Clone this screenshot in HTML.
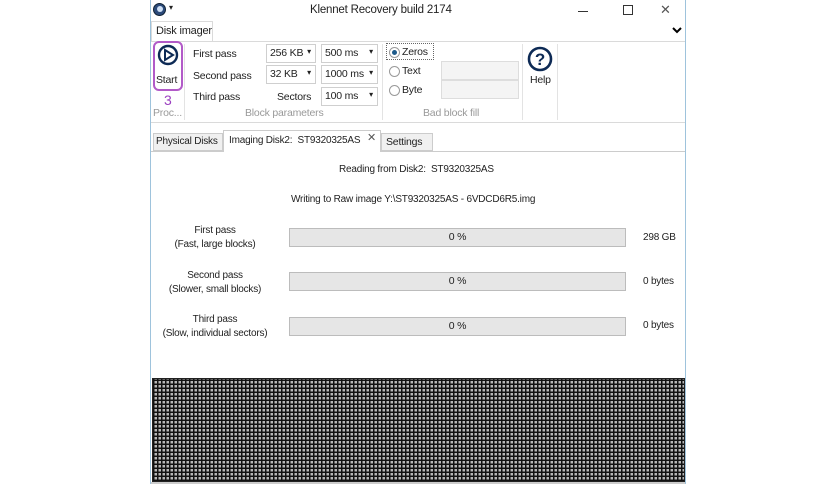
<!DOCTYPE html>
<html><head><meta charset="utf-8"><style>
*{margin:0;padding:0;box-sizing:border-box}
body{width:836px;height:484px;background:#fff;font-family:"Liberation Sans",sans-serif;font-size:10.5px;letter-spacing:-0.2px;color:#222;position:relative;overflow:hidden}
.a{position:absolute;white-space:nowrap}
.dd{position:absolute;height:19px;border:1px solid #cfcfcf;background:#fff;padding:2px 3px;font-size:10.5px}
.dd:after{content:"▾";position:absolute;right:4px;top:2px;font-size:8px}
.bar{position:absolute;left:289px;width:337px;height:19px;background:#e6e6e6;border:1px solid #bcbcbc;text-align:center;line-height:17px}
.rad{position:absolute;width:11px;height:11px;border:1px solid #999;border-radius:50%;background:#fff}
.c{text-align:center}
.g{color:#999}
</style></head><body>
<div class="a" style="left:150px;top:0;width:1px;height:484px;background:#9ec3dc"></div>
<div class="a" style="left:685px;top:0;width:1px;height:484px;background:#9ec3dc"></div>
<div class="a" style="left:153px;top:3px;width:13px;height:13px;border-radius:50%;background:#2b4a7a;border:1px solid #123"></div>
<div class="a" style="left:157px;top:6px;width:6px;height:6px;border-radius:50%;background:#cfe0f5"></div>
<div class="a" style="left:169px;top:3px;font-size:8px">▾</div>
<div class="a" style="left:310px;top:4px;font-size:11.5px">Klennet Recovery build 2174</div>
<div class="a" style="left:578px;top:11px;width:10px;height:1px;background:#333"></div>
<div class="a" style="left:623px;top:5px;width:10px;height:10px;border:1px solid #333"></div>
<div class="a" style="left:660px;top:2px;font-size:13px;color:#555">✕</div>
<div class="a" style="left:151px;top:21px;width:62px;height:21px;border:1px solid #dadada;border-bottom:none;background:#fff"></div>
<div class="a" style="left:156px;top:25px;font-size:11px">Disk imager</div>
<svg class="a" style="left:672px;top:27px" width="10" height="7" viewBox="0 0 10 7"><path d="M1 1 L5 5 L9 1" fill="none" stroke="#000" stroke-width="2"/></svg>
<div class="a" style="left:151px;top:41px;width:534px;height:1px;background:#dadada"></div>
<div class="a" style="left:153px;top:41px;width:30px;height:50px;border:2px solid #b25ac8;border-radius:6px"></div>
<svg class="a" style="left:157px;top:44px" width="22" height="22" viewBox="0 0 22 22"><circle cx="11" cy="11" r="9" fill="none" stroke="#0d2a55" stroke-width="2.4"/><path d="M8 6 L16 11 L8 16 Z" fill="none" stroke="#0d2a55" stroke-width="2"/></svg>
<div class="a" style="left:156px;top:74px">Start</div>
<div class="a" style="left:164px;top:92px;color:#9b3fc0;font-size:14px">3</div>
<div class="a g" style="left:153px;top:107px">Proc...</div>
<div class="a" style="left:184px;top:44px;width:1px;height:76px;background:#e3e3e3"></div>
<div class="a" style="left:193px;top:48px">First pass</div>
<div class="a" style="left:193px;top:70px">Second pass</div>
<div class="a" style="left:193px;top:91px">Third pass</div>
<div class="dd" style="left:266px;top:44px;width:50px">256 KB</div>
<div class="dd" style="left:266px;top:65px;width:50px">32 KB</div>
<div class="a" style="left:277px;top:91px">Sectors</div>
<div class="dd" style="left:321px;top:44px;width:57px">500 ms</div>
<div class="dd" style="left:321px;top:65px;width:57px">1000 ms</div>
<div class="dd" style="left:321px;top:87px;width:57px">100 ms</div>
<div class="a g" style="left:245px;top:107px">Block parameters</div>
<div class="a" style="left:382px;top:44px;width:1px;height:76px;background:#e3e3e3"></div>
<div class="a" style="left:386px;top:43px;width:48px;height:17px;border:1px dotted #666"></div>
<div class="rad" style="left:389px;top:47px"></div>
<div class="a" style="left:392px;top:50px;width:5px;height:5px;border-radius:50%;background:#1d5a8a"></div>
<div class="a" style="left:402px;top:46px">Zeros</div>
<div class="rad" style="left:389px;top:66px"></div>
<div class="a" style="left:402px;top:65px">Text</div>
<div class="rad" style="left:389px;top:85px"></div>
<div class="a" style="left:402px;top:84px">Byte</div>
<div class="a" style="left:441px;top:61px;width:78px;height:19px;border:1px solid #ddd;background:#f4f4f4"></div>
<div class="a" style="left:441px;top:80px;width:78px;height:19px;border:1px solid #ddd;background:#f4f4f4"></div>
<div class="a g" style="left:423px;top:107px">Bad block fill</div>
<div class="a" style="left:522px;top:44px;width:1px;height:76px;background:#e3e3e3"></div>
<svg class="a" style="left:527px;top:46px" width="26" height="26" viewBox="0 0 26 26"><circle cx="13" cy="13" r="11" fill="#fff" stroke="#0d2a55" stroke-width="2.6"/><text x="13" y="19" text-anchor="middle" font-family="Liberation Sans" font-weight="bold" font-size="17" fill="#0d2a55">?</text></svg>
<div class="a" style="left:530px;top:74px">Help</div>
<div class="a" style="left:557px;top:44px;width:1px;height:76px;background:#e3e3e3"></div>
<div class="a" style="left:151px;top:122px;width:534px;height:1px;background:#dadada"></div>
<div class="a" style="left:153px;top:133px;width:70px;height:18px;border:1px solid #ccc;background:#f0f0f0"></div>
<div class="a" style="left:156px;top:136px;font-size:10px">Physical Disks</div>
<div class="a" style="left:223px;top:130px;width:158px;height:22px;border:1px solid #ccc;border-bottom:none;background:#fff"></div>
<div class="a" style="left:229px;top:135px;font-size:10px">Imaging Disk2:&nbsp; ST9320325AS</div>
<div class="a" style="left:367px;top:131px;font-size:11px;color:#555">✕</div>
<div class="a" style="left:381px;top:133px;width:52px;height:18px;border:1px solid #ccc;background:#f0f0f0"></div>
<div class="a" style="left:386px;top:136px;font-size:10.5px">Settings</div>
<div class="a" style="left:151px;top:151px;width:72px;height:1px;background:#ccc"></div>
<div class="a" style="left:381px;top:151px;width:304px;height:1px;background:#ccc"></div>
<div class="a" style="left:339px;top:164px;font-size:10px">Reading from Disk2:&nbsp; ST9320325AS</div>
<div class="a" style="left:291px;top:194px;font-size:10px">Writing to Raw image Y:\ST9320325AS - 6VDCD6R5.img</div>
<div class="a c" style="left:150px;top:224px;width:130px;line-height:14px;font-size:10px">First pass<br>(Fast, large blocks)</div>
<div class="a c" style="left:150px;top:269px;width:130px;line-height:14px;font-size:10px">Second pass<br>(Slower, small blocks)</div>
<div class="a c" style="left:150px;top:313px;width:130px;line-height:14px;font-size:10px">Third pass<br>(Slow, individual sectors)</div>
<div class="bar" style="top:228px">0 %</div>
<div class="bar" style="top:272px">0 %</div>
<div class="bar" style="top:317px">0 %</div>
<div class="a" style="left:643px;top:232px;font-size:10px">298 GB</div>
<div class="a" style="left:643px;top:276px;font-size:10px">0 bytes</div>
<div class="a" style="left:643px;top:320px;font-size:10px">0 bytes</div>
<div class="a" style="left:152px;top:378px;width:533px;height:104px;border:1px solid #222;background-color:#fff;background-image:repeating-linear-gradient(90deg,#111 0 1.5px,transparent 1.5px 4px),repeating-linear-gradient(0deg,#111 0 1.5px,#b8b8b8 1.5px 4px)"></div>
<div class="a" style="left:151px;top:482px;width:534px;height:2px;background:#ccc"></div>
</body></html>
